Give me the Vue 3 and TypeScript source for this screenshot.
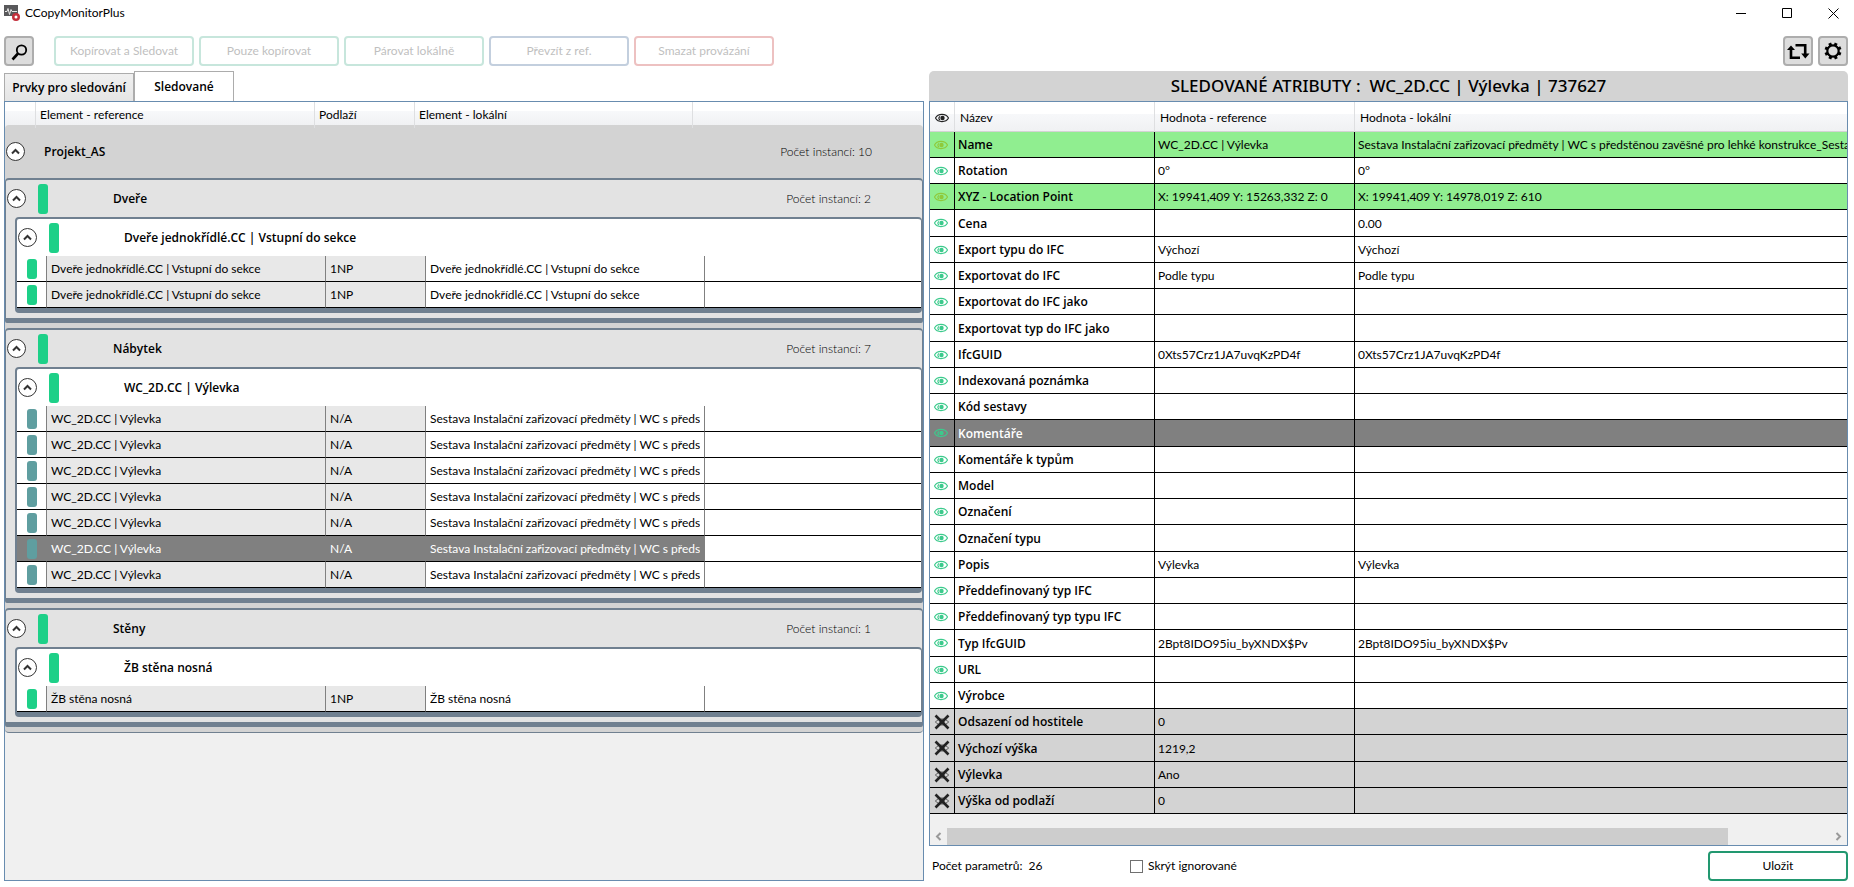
<script setup lang="ts">
import { ref } from 'vue'

interface Item { ref: string; level: string; local: string; state: string; selected?: boolean }
interface Group { name: string; count: number; sub: string; items: Item[] }
interface Attr { name: string; a: string; b: string; kind?: string }

const actions = [
  { label: 'Kopírovat a Sledovat', tone: 'green' },
  { label: 'Pouze kopírovat', tone: 'green' },
  { label: 'Párovat lokálně', tone: 'green' },
  { label: 'Převzít z ref.', tone: 'blue' },
  { label: 'Smazat provázání', tone: 'red' },
]

const door = 'Dveře jednokřídlé.CC | Vstupní do sekce'
const assembly = 'Sestava Instalační zařizovací předměty | WC s předstěnou zavěšné pro lehké konstrukce_Sestava'
const wall = 'ŽB stěna nosná'

const groups: Group[] = [
  {
    name: 'Dveře', count: 2, sub: door,
    items: [1, 2].map(() => ({ ref: door, level: '1NP', local: door, state: 'ok' })),
  },
  {
    name: 'Nábytek', count: 7, sub: 'WC_2D.CC | Výlevka',
    items: [1, 2, 3, 4, 5, 6, 7].map((n) => ({
      ref: 'WC_2D.CC | Výlevka', level: 'N/A', local: assembly, state: 'moved', selected: n === 6,
    })),
  },
  {
    name: 'Stěny', count: 1, sub: wall,
    items: [{ ref: wall, level: '1NP', local: wall, state: 'ok' }],
  },
]

const attrs: Attr[] = [
  { name: 'Name', a: 'WC_2D.CC | Výlevka', b: assembly, kind: 'diff' },
  { name: 'Rotation', a: '0°', b: '0°' },
  { name: 'XYZ - Location Point', a: 'X: 19941,409 Y: 15263,332 Z: 0', b: 'X: 19941,409 Y: 14978,019 Z: 610', kind: 'diff' },
  { name: 'Cena', a: '', b: '0.00' },
  { name: 'Export typu do IFC', a: 'Výchozí', b: 'Výchozí' },
  { name: 'Exportovat do IFC', a: 'Podle typu', b: 'Podle typu' },
  { name: 'Exportovat do IFC jako', a: '', b: '' },
  { name: 'Exportovat typ do IFC jako', a: '', b: '' },
  { name: 'IfcGUID', a: '0Xts57Crz1JA7uvqKzPD4f', b: '0Xts57Crz1JA7uvqKzPD4f' },
  { name: 'Indexovaná poznámka', a: '', b: '' },
  { name: 'Kód sestavy', a: '', b: '' },
  { name: 'Komentáře', a: '', b: '', kind: 'selected' },
  { name: 'Komentáře k typům', a: '', b: '' },
  { name: 'Model', a: '', b: '' },
  { name: 'Označení', a: '', b: '' },
  { name: 'Označení typu', a: '', b: '' },
  { name: 'Popis', a: 'Výlevka', b: 'Výlevka' },
  { name: 'Předdefinovaný typ IFC', a: '', b: '' },
  { name: 'Předdefinovaný typ typu IFC', a: '', b: '' },
  { name: 'Typ IfcGUID', a: '2Bpt8IDO95iu_byXNDX$Pv', b: '2Bpt8IDO95iu_byXNDX$Pv' },
  { name: 'URL', a: '', b: '' },
  { name: 'Výrobce', a: '', b: '' },
  { name: 'Odsazení od hostitele', a: '0', b: '', kind: 'ignored' },
  { name: 'Výchozí výška', a: '1219,2', b: '', kind: 'ignored' },
  { name: 'Výlevka', a: 'Ano', b: '', kind: 'ignored' },
  { name: 'Výška od podlaží', a: '0', b: '', kind: 'ignored' },
]

const hideIgnored = ref(false)
</script>

<template>
  <div class="window">
    <header class="titlebar">
      <svg class="app-icon" viewBox="0 0 16 16" aria-hidden="true">
        <rect x="0" y="0" width="14" height="11" fill="#59595b" />
        <path d="M1 6.500h2l1-3 1.500 6 1.500-5 1 2h5" fill="none" stroke="#e8e8e8" stroke-width="1" />
        <circle cx="12" cy="12" r="4" fill="#c4303c" />
        <circle cx="12" cy="12" r="1.500" fill="#fff" />
      </svg>
      <span class="app-name">CCopyMonitorPlus</span>
      <div class="caption">
        <button type="button" aria-label="Minimalizovat"><svg viewBox="0 0 11 11"><path d="M0 5.500h10" /></svg></button>
        <button type="button" aria-label="Maximalizovat"><svg viewBox="0 0 11 11"><path d="M.5.5h9v9h-9z" /></svg></button>
        <button type="button" aria-label="Zavřít"><svg viewBox="0 0 11 11"><path d="M.5.5l10 10M10.500.5l-10 10" /></svg></button>
      </div>
    </header>

    <div class="toolbar">
      <button type="button" class="icon-btn search" aria-label="Hledat">
        <svg viewBox="0 0 26 26"><circle cx="15.500" cy="12" r="4.700" fill="none" stroke="#000" stroke-width="1.800" /><path d="M12 15.500L6.500 21.500" stroke="#000" stroke-width="2.600" /></svg>
      </button>
      <button v-for="a in actions" :key="a.label" type="button" class="action" :class="a.tone" disabled>{{ a.label }}</button>
      <button type="button" class="icon-btn push" aria-label="Synchronizovat">
        <svg viewBox="0 0 26 26">
          <path d="M6 20V11M4.700 19.700H15M10.500 7.200H21.500M20.200 6.500V16" fill="none" stroke="#000" stroke-width="2.600" />
          <path d="M2 12L6 7.500l4 4.500zM16.200 15.500h8.300L20.300 20.500z" />
        </svg>
      </button>
      <button type="button" class="icon-btn" aria-label="Nastavení">
        <svg viewBox="0 0 26 26">
          <circle cx="13" cy="13" r="5.700" fill="none" stroke="#000" stroke-width="2.200" />
          <g stroke="#000" stroke-width="3">
            <path v-for="n in 8" :key="n" d="M13 4.500V7.500" :transform="`rotate(${n * 45 + 22} 13 13)`" />
          </g>
        </svg>
      </button>
    </div>

    <main class="panes">
      <section class="left">
        <div class="tabs" role="tablist">
          <button type="button" role="tab" class="tab">Prvky pro sledování</button>
          <button type="button" role="tab" class="tab active" aria-selected="true">Sledované</button>
        </div>
        <div class="tree">
          <div class="tree-head">
            <span></span><span>Element - reference</span><span>Podlaží</span><span>Element - lokální</span>
          </div>
          <div class="project">
            <div class="project-head">
              <button type="button" class="expander" aria-label="Sbalit"><svg viewBox="0 0 19 19"><circle cx="9.500" cy="9.500" r="9" /><path d="M6 11.500l3.500-3.500 3.500 3.500" /></svg></button>
              <b>Projekt_AS</b>
              <span class="count">Počet instancí: 10</span>
            </div>
            <div v-for="g in groups" :key="g.name" class="group">
              <div class="group-head">
                <button type="button" class="expander" aria-label="Sbalit"><svg viewBox="0 0 19 19"><circle cx="9.500" cy="9.500" r="9" /><path d="M6 11.500l3.500-3.500 3.500 3.500" /></svg></button>
                <i class="bar"></i>
                <b>{{ g.name }}</b>
                <span class="count">Počet instancí: {{ g.count }}</span>
              </div>
              <div class="sub">
                <div class="sub-head">
                  <button type="button" class="expander" aria-label="Sbalit"><svg viewBox="0 0 19 19"><circle cx="9.500" cy="9.500" r="9" /><path d="M6 11.500l3.500-3.500 3.500 3.500" /></svg></button>
                  <i class="bar"></i>
                  <b>{{ g.sub }}</b>
                </div>
                <table class="items">
                  <colgroup><col class="c0" /><col class="c1" /><col class="c2" /><col class="c1" /><col /></colgroup>
                  <tbody>
                    <tr v-for="(it, i) in g.items" :key="i" :class="{ selected: it.selected }">
                      <td><i class="pill" :class="it.state"></i></td>
                      <td class="shade">{{ it.ref }}</td>
                      <td class="shade">{{ it.level }}</td>
                      <td><div class="clip">{{ it.local }}</div></td>
                      <td></td>
                    </tr>
                  </tbody>
                </table>
              </div>
            </div>
          </div>
        </div>
      </section>

      <section class="right">
        <h1>SLEDOVANÉ ATRIBUTY :&nbsp; WC_2D.CC | Výlevka | 737627</h1>
        <div class="grid">
          <table class="attrs">
            <colgroup><col class="a0" /><col class="a1" /><col class="a1" /><col /></colgroup>
            <thead>
              <tr>
                <th><svg class="eye dark" viewBox="0 0 14 10"><path d="M.5 5C3 .2 11 .2 13.500 5 11 9.800 3 9.800.5 5z" /><path d="M5 3.500C3.500 4.500 3.500 6 5 7" /><circle cx="7.500" cy="5" r="2.200" /></svg></th>
                <th>Název</th><th>Hodnota - reference</th><th>Hodnota - lokální</th>
              </tr>
            </thead>
            <tbody>
              <tr v-for="r in attrs" :key="r.name" :class="r.kind">
                <td>
                  <svg v-if="r.kind === 'ignored'" class="crossed" viewBox="0 0 16 16">
                    <path d="M1.500 8C4 4 12 4 14.500 8 12 12 4 12 1.500 8z" fill="none" stroke="#555" /><circle cx="8" cy="8" r="2.500" fill="#333" />
                    <path d="M1.500 1.500l13 13M14.500 1.500l-13 13" stroke="#222" stroke-width="2.600" />
                  </svg>
                  <svg v-else class="eye" viewBox="0 0 14 10"><path d="M.5 5C3 .2 11 .2 13.500 5 11 9.800 3 9.800.5 5z" /><path d="M5 3.500C3.500 4.500 3.500 6 5 7" /><circle cx="7.500" cy="5" r="2.200" /></svg>
                </td>
                <td class="name">{{ r.name }}</td>
                <td>{{ r.a }}</td>
                <td>{{ r.b }}</td>
              </tr>
            </tbody>
          </table>
          <div class="scrollbar">
            <svg viewBox="0 0 17 17"><path d="M10.500 5L7 8.500l3.500 3.500" /></svg>
            <div class="track"><div class="thumb"></div></div>
            <svg viewBox="0 0 17 17"><path d="M6.500 5L10 8.500 6.500 12" /></svg>
          </div>
        </div>
        <footer class="footer">
          <span>Počet parametrů:&nbsp; 26</span>
          <label><input v-model="hideIgnored" type="checkbox" />Skrýt ignorované</label>
          <button type="button" class="save">Uložit</button>
        </footer>
      </section>
    </main>
  </div>
</template>

<style>
body { margin: 0; background: #fff; }
</style>

<style scoped>
.window, .window * { box-sizing: border-box; }
.window {
  display: flex; flex-direction: column; min-height: 100vh; padding: 0 6px 6px 4px;
  font: 12px/16px Lato, "Open Sans", sans-serif; font-variant-ligatures: none; color: #000; background: #fff;
}
button { font: inherit; color: inherit; padding: 0; margin: 0; background: none; border: 0; }
svg { display: block; }
b, .tab, .attrs .name { font-family: "Open Sans", sans-serif; font-weight: 600; }

.titlebar { display: flex; align-items: center; height: 26px; }
.app-icon { width: 16px; height: 16px; }
.app-name { margin-left: 5px; }
.caption { display: flex; margin-left: auto; }
.caption button { width: 46px; height: 24px; display: flex; align-items: center; justify-content: center; }
.caption button:nth-child(2) { margin-right: 8px; }
.caption button:last-child { width: 30px; }
.caption svg { width: 11px; height: 11px; fill: none; stroke: #000; }

.toolbar { display: flex; gap: 5px; margin: 10px 0 5px; }
.icon-btn { width: 30px; height: 30px; background: #ddd; border: 2px solid #adadad; border-radius: 4px; }
.icon-btn svg { width: 26px; height: 26px; }
.search { margin-right: 15px; }
.push { margin-left: auto; }
.action { width: 140px; height: 30px; border: 2px solid; border-radius: 4px; color: #bfbfbf; background: #fff; }
.green { border-color: #c7e6dc; }
.blue { border-color: #c3cfde; }
.red { border-color: #edc1c1; }

.panes { flex: 1; display: grid; grid-template-columns: minmax(0, 920fr) minmax(0, 919fr); gap: 5px; }
.left, .right { display: flex; flex-direction: column; }
.tabs { display: flex; align-items: flex-end; height: 30px; }
.tab { width: 130px; height: 28px; background: linear-gradient(#f0f0f0, #e5e5e5); border: 1px solid #acacac; border-bottom: 0; }
.tab.active { width: 100px; height: 30px; background: #fff; }

.tree { flex: 1; background: #f0f0f0; border: 1px solid #688caf; }
.tree-head { display: grid; grid-template-columns: 31px 279px 100px 278px 1fr; height: 23px; line-height: 26px; background: linear-gradient(#fff 40%, #f7f8fa 41%, #f0f1f3); }
.tree-head span { padding-left: 4px; border-right: 1px solid #dedfe1; }
.project { background: #d3d3d3; padding-bottom: 5px; border-bottom: 1px solid #708090; border-radius: 4px; }
.project-head { display: flex; align-items: center; height: 53px; padding-left: 1px; }
.project-head b { margin-left: 19px; }
.expander { width: 19px; height: 19px; flex: none; }
.expander svg { width: 19px; height: 19px; fill: #fff; stroke: #333; }
.expander path { fill: none; stroke-width: 2; }
.count { margin-left: auto; margin-right: 51px; font-weight: 300; }
.group { background: #e3e3e3; border: 1px solid #708090; border-width: 2px 1px 5px; border-radius: 4px 4px 2px 2px; padding-bottom: 5px; }
.group + .group { margin-top: 5px; }
.group-head, .sub-head { display: flex; align-items: center; height: 37px; padding-left: 1px; }
.bar { width: 10px; height: 30px; flex: none; border-radius: 3px; background: #1dd088; margin-left: 12px; }
.group-head b, .sub-head b { margin-left: 65px; }
.sub { margin-left: 9px; background: #fff; border: 2px solid #708090; border-width: 2px 1px 5px 2px; border-radius: 4px; overflow: hidden; }

.items, .attrs { width: 100%; table-layout: fixed; border-spacing: 0; }
.items .c0 { width: 30px; }
.items .c1 { width: 279px; }
.items .c2 { width: 100px; }
.items td { height: 26px; padding: 0 4px; border-right: 1px solid #808080; border-bottom: 1px solid #000; white-space: nowrap; overflow: hidden; }
.items td:last-child { border-right: 0; }
.items td:first-child { padding: 0 0 0 10px; }
.clip { overflow: hidden; }
.shade { background: #e8e8e8; }
.pill { display: block; width: 10px; height: 20px; border-radius: 3px; background: #1dd088; }
.pill.moved { background: #5f9ea0; }
.items .selected td:not(:last-child) { background: #808080; color: #fff; }

h1 { margin: 0; height: 30px; font: 500 17px/30px "Noto Sans", "Open Sans", sans-serif; text-align: center; background: #d3d3d3; border-radius: 5px 5px 0 0; }
.grid { flex: 1; display: flex; flex-direction: column; background: #f0f0f0; border: 1px solid #688caf; overflow: hidden; }
.attrs .a0 { width: 25px; }
.attrs .a1 { width: 200px; }
.attrs th { height: 30px; padding: 3px 0 0 5px; text-align: left; font-weight: 400; background: linear-gradient(#fff 40%, #f7f8fa 41%, #f0f1f3); border-right: 1px solid #dedfe1; border-bottom: 1px solid #d3d3d3; }
.attrs td { height: 26px; padding: 1px 0 0 3px; background: #fff; border-right: 1px solid #000; border-bottom: 1px solid #000; white-space: nowrap; overflow: hidden; }
.attrs tr:nth-child(4n) td { height: 27px; }
.attrs td:first-child { padding: 0 0 0 4px; }
.attrs th:last-child, .attrs td:last-child { border-right: 0; }
.attrs .diff td { background: #90ee90; }
.attrs .selected td { background: #808080; color: #fff; }
.attrs .ignored td { background: #d3d3d3; }
.eye { width: 14px; height: 10px; fill: none; stroke: #3cca8c; stroke-width: 1.200; color: #3cca8c; }
.eye circle { fill: currentColor; stroke: none; }
.diff .eye { stroke: #8fc93a; color: #8fc93a; }
.eye.dark { stroke: #222; color: #222; }
.crossed { width: 16px; height: 16px; }

.scrollbar { display: flex; margin-top: auto; height: 17px; }
.scrollbar svg { width: 17px; height: 17px; fill: none; stroke: #999; stroke-width: 2; }
.track { flex: 1; }
.thumb { width: 88.5%; height: 17px; background: #cdcdcd; }

.footer { display: grid; grid-template-columns: 198px 1fr 140px; align-items: center; margin-top: 5px; padding-left: 3px; }
.footer label { display: flex; align-items: center; gap: 5px; }
.footer input { appearance: none; width: 13px; height: 13px; margin: 0; border: 1px solid #707070; background: #fff; }
.save { height: 30px; border: 2px solid #229870; border-radius: 4px; }
</style>
